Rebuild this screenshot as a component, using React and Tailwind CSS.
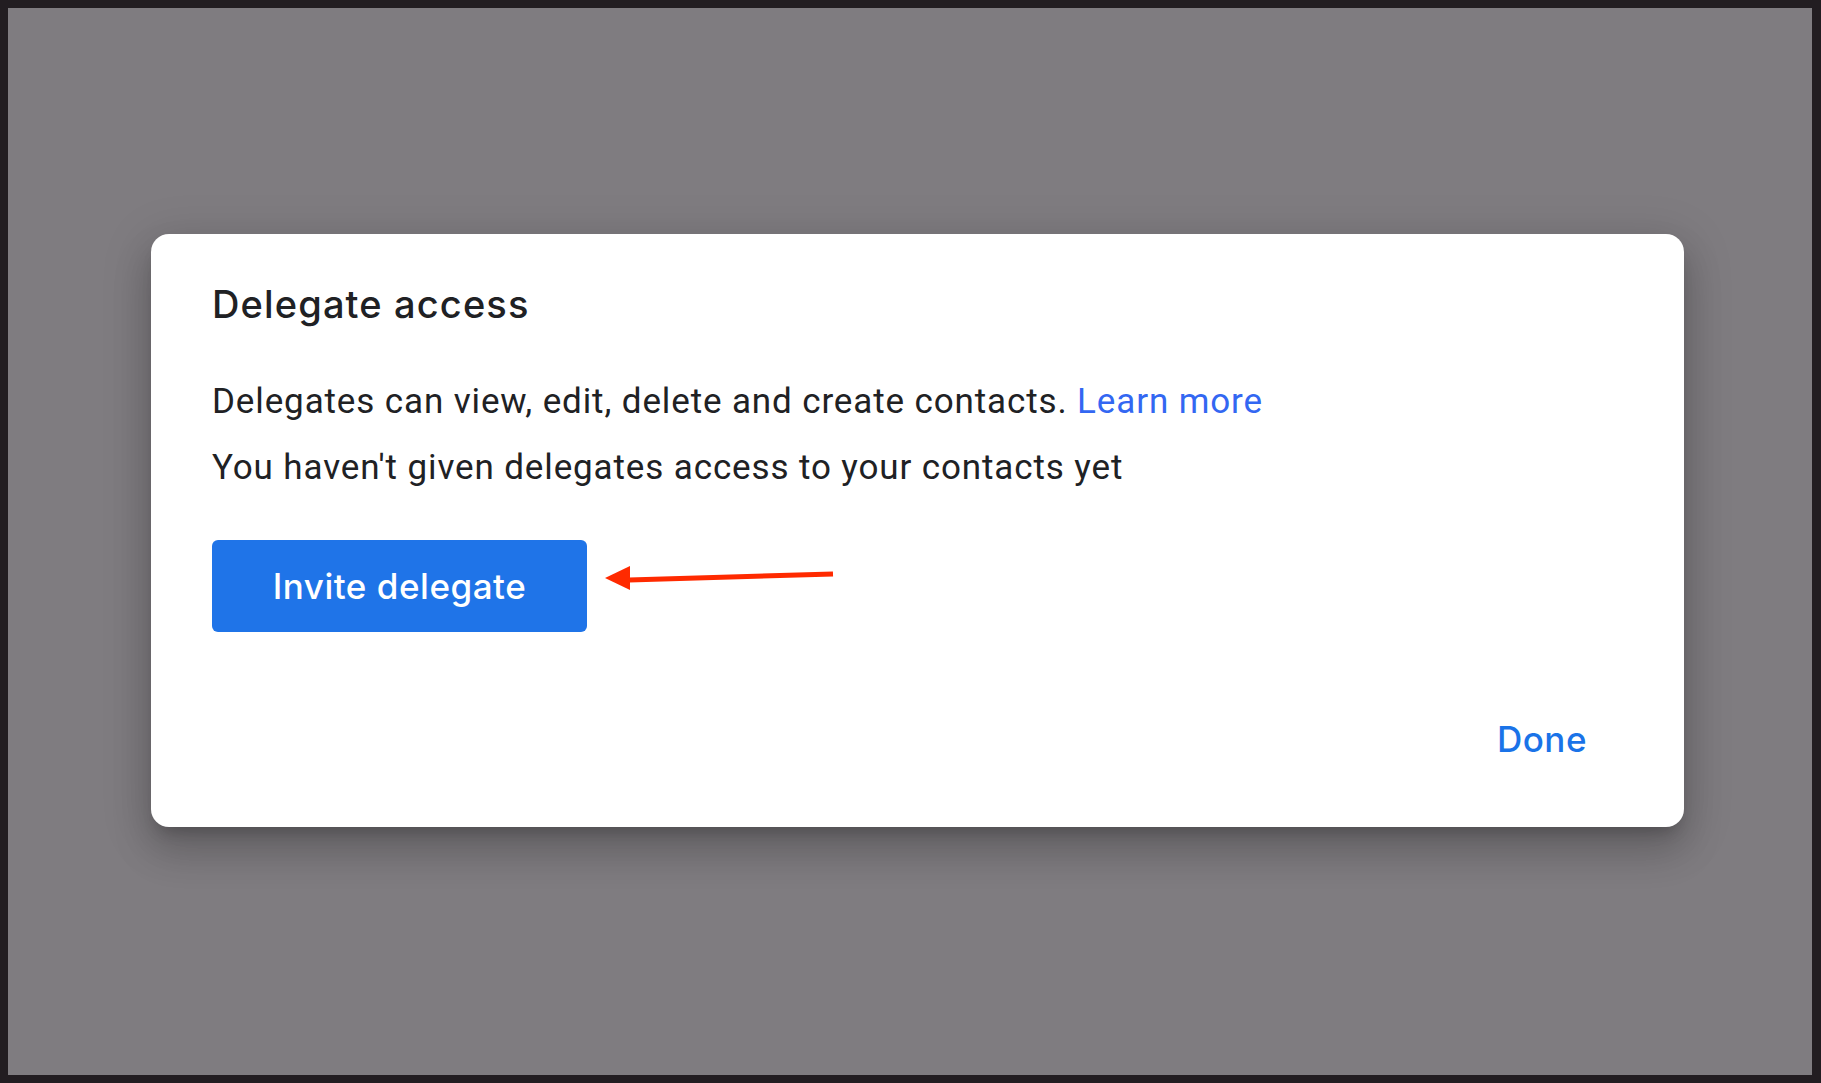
export default function App() {
  return (
    <div className="w-[1821px] h-[1083px] bg-[#221d21] pt-[8px] pb-[8px] pl-[8px] pr-[9px]">
      {/* Backdrop */}
      <div className="w-full h-full bg-[#7f7c80] pl-[143px] pt-[226px]">
        {/* Dialog */}
        <div
          className="w-[1533px] h-[593px] bg-white rounded-[18px] pl-[61px] pr-[97px] pt-[46px] flex flex-col shadow-[0_11px_15px_-7px_rgba(0,0,0,0.2),0_24px_38px_3px_rgba(0,0,0,0.14),0_9px_46px_8px_rgba(0,0,0,0.12)]"
          style={{ fontFamily: 'Roboto, "Liberation Sans", sans-serif' }}
        >
          <h1
            className="text-[38px] leading-[48px] text-[#202124] font-medium tracking-[0.03em]"
            style={{ fontFamily: 'Inter, Roboto, sans-serif' }}
          >
            Delegate access
          </h1>

          <p className="mt-[52px] text-[35px] leading-[44px] text-[#202124] tracking-[0.025em]">
            Delegates can view, edit, delete and create contacts.{' '}
            <a href="#" className="text-[#3367f2]">Learn more</a>
          </p>
          <p className="mt-[22px] text-[35px] leading-[44px] text-[#202124] tracking-[0.025em]">
            You haven't given delegates access to your contacts yet
          </p>

          <div className="mt-[50px] flex items-start gap-[18px]">
            <button
              className="w-[375px] h-[92px] rounded-[6px] bg-[#1f74e8] text-white text-[35px] font-medium tracking-[0.015em]"
              style={{ fontFamily: 'Inter, Roboto, sans-serif' }}
            >
              Invite delegate
            </button>
            <svg width="230" height="92" viewBox="0 0 230 92">
              <path d="M24 40 L228 34" stroke="#ff2a00" strokeWidth="5" strokeLinecap="butt" />
              <polygon points="0,38 25,26 25,50" fill="#ff2a00" />
            </svg>
          </div>

          <div className="mt-[85px] flex justify-end">
            <button
              className="text-[35px] leading-[44px] font-medium text-[#1a73e8] tracking-[0.015em]"
              style={{ fontFamily: 'Inter, Roboto, sans-serif' }}
            >
              Done
            </button>
          </div>
        </div>
      </div>
    </div>
  )
}
